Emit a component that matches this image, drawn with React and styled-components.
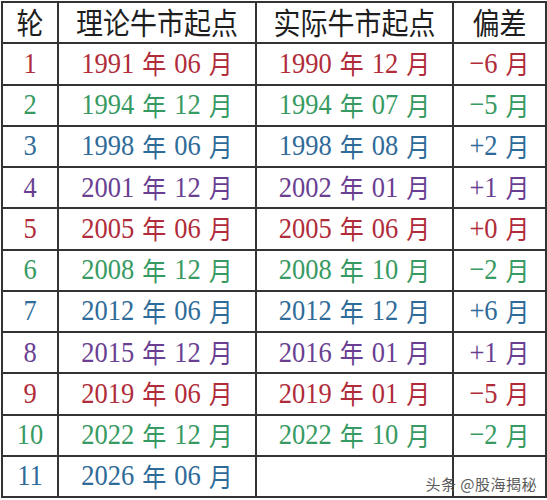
import React from 'react';
import styled, { createGlobalStyle } from 'styled-components';

const GlobalStyle = createGlobalStyle`
  html, body {
    margin: 0;
    padding: 0;
    background: #fff;
  }
  body {
    font-family: "Liberation Serif", "Noto Sans CJK SC", serif;
  }
`;

const tones = {
  red: '#b02c3a',
  green: '#379a62',
  blue: '#2f6b98',
  purple: '#6a3f92',
};

const Frame = styled.div`
  position: relative;
  width: 546px;
  height: 497px;
  margin: 1px 0 0 1px;
`;

const Grid = styled.div`
  display: grid;
  grid-template-columns: 54px 196px 195px 91px;
  grid-template-rows: repeat(12, minmax(0, 1fr));
  gap: 2px;
  padding: 2px;
  height: 100%;
  box-sizing: border-box;
  background: #333;
`;

const Cell = styled.div`
  display: flex;
  align-items: center;
  justify-content: center;
  min-height: 0;
  background: #fff;
  white-space: pre;
  line-height: 1.2;
  color: ${({ $tone }) => tones[$tone] || '#1e1e1e'};
`;

// the source picture is a little stretched vertically, so the glyphs are too
const Head = styled.span`
  display: inline-block;
  font-family: "Noto Sans CJK SC", sans-serif;
  font-size: 27px;
  transform: scaleY(1.1);
`;

const Num = styled.span`
  display: inline-block;
  font-family: "Liberation Serif", serif;
  font-size: 26.5px;
  transform: scaleY(1.13);
`;

const Unit = styled.span`
  display: inline-block;
  font-family: "Noto Sans CJK SC", sans-serif;
  font-size: 24px;
  margin: ${({ $last }) => ($last ? '0 0 0 8px' : '0 8px')};
  transform: scaleY(1.1);
`;

const Watermark = styled.div`
  position: absolute;
  right: 10px;
  bottom: 7px;
  font-family: "Noto Sans CJK SC", "Noto Sans", sans-serif;
  font-size: 15px;
  line-height: 1;
  color: #5a5a5a;
  letter-spacing: 0.5px;
`;

const rows = [
  ['1', '1991 年 06 月', '1990 年 12 月', '−6 月', 'red'],
  ['2', '1994 年 12 月', '1994 年 07 月', '−5 月', 'green'],
  ['3', '1998 年 06 月', '1998 年 08 月', '+2 月', 'blue'],
  ['4', '2001 年 12 月', '2002 年 01 月', '+1 月', 'purple'],
  ['5', '2005 年 06 月', '2005 年 06 月', '+0 月', 'red'],
  ['6', '2008 年 12 月', '2008 年 10 月', '−2 月', 'green'],
  ['7', '2012 年 06 月', '2012 年 12 月', '+6 月', 'blue'],
  ['8', '2015 年 12 月', '2016 年 01 月', '+1 月', 'purple'],
  ['9', '2019 年 06 月', '2019 年 01 月', '−5 月', 'red'],
  ['10', '2022 年 12 月', '2022 年 10 月', '−2 月', 'green'],
  ['11', '2026 年 06 月', '', '', 'blue'],
];

function Mixed({ text }) {
  if (!text) return null;
  const parts = text.split(' ');
  return parts.map((p, i) =>
    /[年月]/.test(p) ? (
      <Unit key={i} $last={i === parts.length - 1}>{p}</Unit>
    ) : (
      <Num key={i}>{p}</Num>
    )
  );
}

export default function App() {
  return (
    <>
      <GlobalStyle />
      <Frame>
        <Grid>
          <Cell><Head>轮</Head></Cell>
          <Cell><Head>理论牛市起点</Head></Cell>
          <Cell><Head>实际牛市起点</Head></Cell>
          <Cell><Head>偏差</Head></Cell>
          {rows.map(([n, theory, actual, diff, tone]) => (
            <React.Fragment key={n}>
              <Cell $tone={tone}><Num>{n}</Num></Cell>
              <Cell $tone={tone}><Mixed text={theory} /></Cell>
              <Cell $tone={tone}><Mixed text={actual} /></Cell>
              <Cell $tone={tone}><Mixed text={diff} /></Cell>
            </React.Fragment>
          ))}
        </Grid>
        <Watermark>头条 @股海揭秘</Watermark>
      </Frame>
    </>
  );
}
